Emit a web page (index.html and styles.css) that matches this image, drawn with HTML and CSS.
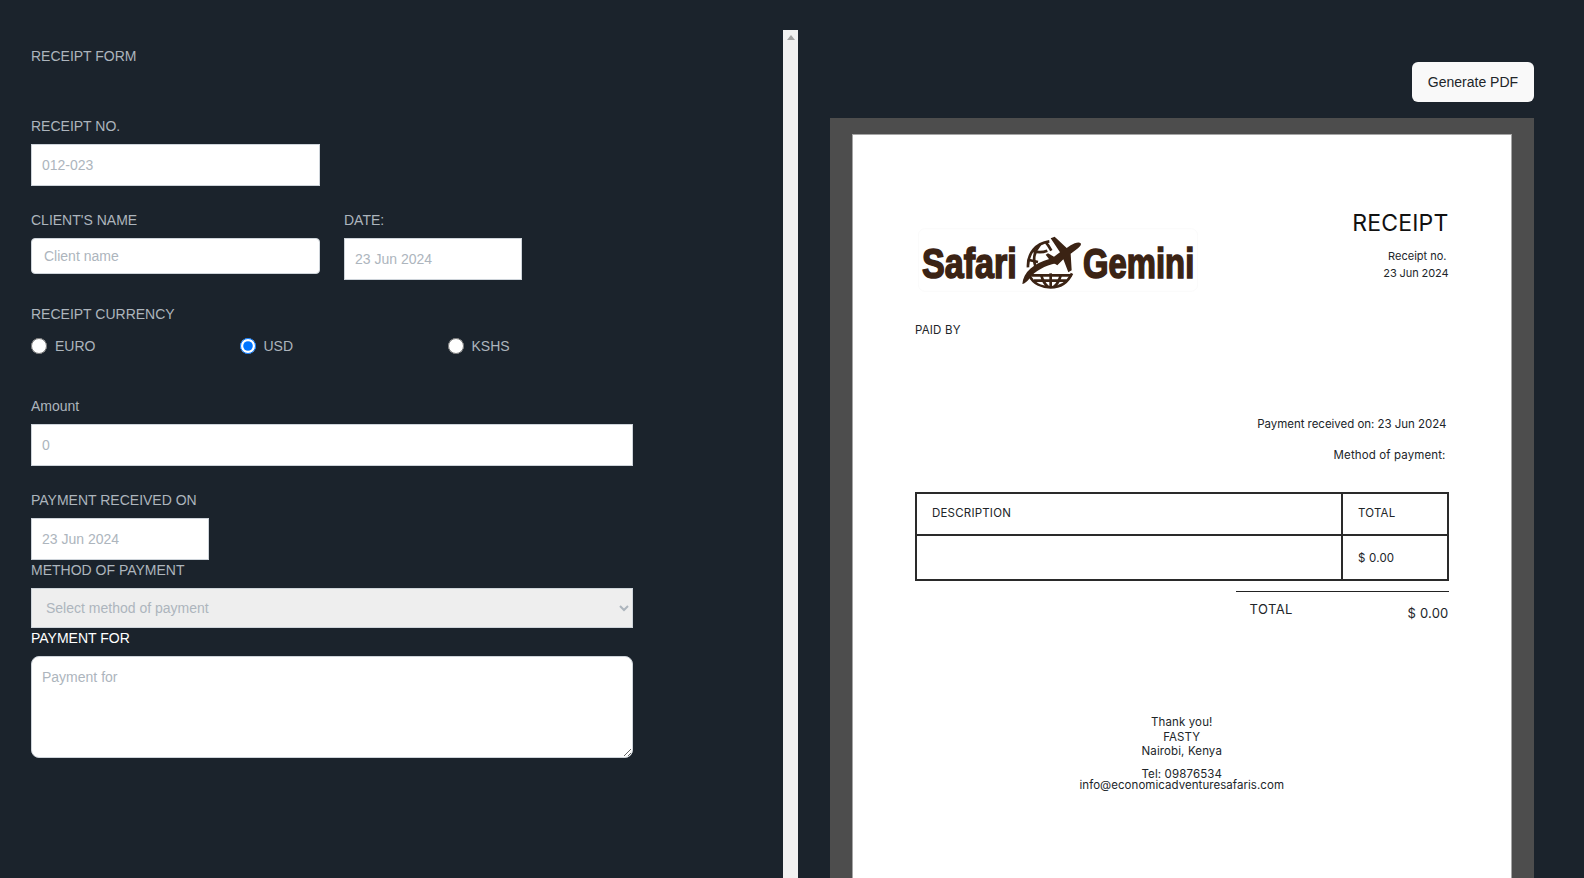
FILE: index.html
```html
<!DOCTYPE html>
<html lang="en">
<head>
<meta charset="utf-8">
<title>Receipt</title>
<link rel="stylesheet" href="styles.css">
</head>
<body>
<div class="app">
  <form class="form-pane">
    <div class="title">RECEIPT FORM</div>
    <div class="field field-first">
      <label class="label">RECEIPT NO.</label>
      <input class="input w-wide" placeholder="012-023">
    </div>
    <div class="row">
      <div class="field">
        <label class="label">CLIENT'S NAME</label>
        <input class="input input-client w-wide" placeholder="Client name">
      </div>
      <div class="field">
        <label class="label">DATE:</label>
        <input class="input w-date" placeholder="23 Jun 2024">
      </div>
    </div>
    <div class="field">
      <label class="label">RECEIPT CURRENCY</label>
      <div class="radios">
        <label class="radio"><input type="radio" name="cur">EURO</label>
        <label class="radio"><input type="radio" name="cur" checked>USD</label>
        <label class="radio"><input type="radio" name="cur">KSHS</label>
      </div>
    </div>
    <div class="field field-amount">
      <label class="label">Amount</label>
      <input class="input w-full" placeholder="0">
    </div>
    <div class="field">
      <label class="label">PAYMENT RECEIVED ON</label>
      <input class="input w-date" placeholder="23 Jun 2024">
    </div>
    <div class="field field-tight">
      <label class="label">METHOD OF PAYMENT</label>
      <select class="select w-full" disabled><option>Select method of payment</option></select>
    </div>
    <div class="field field-tight">
      <label class="label label-white">PAYMENT FOR</label>
      <textarea class="textarea w-full" placeholder="Payment for"></textarea>
    </div>
  </form>

  <div class="scrollbar"><span class="scroll-arrow"></span></div>

  <section class="preview-pane">
    <div class="actions"><button class="btn" type="button">Generate PDF</button></div>
    <div class="sheet-bg">
      <article class="sheet">
        <header class="sheet-head">
          <svg class="logo" viewBox="52 55 840 190" role="img" aria-label="Safari Gemini">
            <rect x="53" y="56" width="838" height="188" rx="20" fill="#fff" stroke="#f7f7f7" stroke-width="2"/>
            <text class="logo-text" transform="translate(64 205) scale(.81 1)">Safari</text>
            <text class="logo-text" transform="translate(547 205) scale(.78 1)">Gemini</text>
            <g fill="none" stroke="#3b2314" stroke-width="8">
              <path d="M382,172 C380,130 405,100 446,94"/>
              <path d="M418,104 C400,125 398,150 404,168"/>
              <path d="M396,122 C410,128 425,128 440,122"/>
              <path d="M385,150 L412,156"/>
              <path d="M436,98 C445,108 448,115 452,122"/>
              <path d="M392,196 H512"/>
              <path d="M400,212 H498"/>
              <path d="M386,196 C398,222 425,232 450,232 C478,232 500,220 514,190"/>
              <path d="M450,190 V232"/>
              <path d="M422,196 C426,212 434,224 442,230"/>
              <path d="M480,196 C476,212 468,224 460,230"/>
            </g>
            <g fill="#3b2314">
              <path d="M540,100 C536,95 522,98 510,106 L498,114 L462,80 L450,85 L478,127 L460,140 L442,130 L435,134 L450,154 L470,166 L488,148 L503,187 L513,181 L510,131 L530,116 C538,110 543,104 540,100 Z"/>
              <path d="M365,222 C368,186 398,160 448,146 L466,160 C434,166 402,184 386,206 C379,215 372,220 365,222 Z"/>
            </g>
          </svg>
          <div class="head-right">
            <h1 class="doc-title">RECEIPT</h1>
            <div class="doc-meta doc-no">Receipt no.</div>
            <div class="doc-meta doc-date">23 Jun 2024</div>
          </div>
        </header>
        <div class="paid-by">PAID BY</div>
        <div class="pay-line pay-first">Payment received on: 23 Jun 2024</div>
        <div class="pay-line pay-second">Method of payment:</div>
        <table class="items">
          <tr class="items-head"><td class="c-desc">DESCRIPTION</td><td class="c-total">TOTAL</td></tr>
          <tr class="items-row"><td></td><td class="c-total">$ 0.00</td></tr>
        </table>
        <div class="totals">
          <span class="totals-label">TOTAL</span>
          <span class="totals-value">$ 0.00</span>
        </div>
        <footer class="thanks">
          <div>Thank you!</div>
          <div>FASTY</div>
          <div>Nairobi, Kenya</div>
          <div class="tel">Tel: 09876534</div>
          <div class="mail">info@economicadventuresafaris.com</div>
        </footer>
      </article>
    </div>
  </section>
</div>
</body>
</html>
```

FILE: styles.css
```css
* { box-sizing: border-box; }
html, body { margin: 0; height: 100%; overflow: hidden; }
body {
  background: #1b232c;
  font-family: "Liberation Sans", Arial, sans-serif;
  font-size: 14px;
  color: #adb5bd;
}
.app { display: flex; height: 878px; overflow: hidden; align-items: flex-start; }

/* form */
.form-pane { width: 783px; flex: none; padding: 48px 0 0 31px; }
.title { line-height: 16px; }
.field { margin-top: 26px; }
.field-first { margin-top: 54px; }
.field-amount { margin-top: 44px; }
.field-tight { margin-top: 2px; }
.label { display: block; line-height: 16px; margin-bottom: 10px; }
.label-white { color: #fff; }
.row { display: flex; gap: 24px; align-items: flex-start; }
.w-wide { width: 289px; }
.w-date { width: 178px; }
.w-full { width: 602px; }
.input, .select, .textarea {
  display: block;
  font: 14px "Liberation Sans", Arial, sans-serif;
  border: 1px solid #ced4da;
  border-radius: 0;
  background: #fff;
  color: #495057;
  margin: 0;
  outline: none;
}
.input { height: 42px; padding: 0 10px; }
.input-client { height: 36px; border-radius: 4px; padding: 0 12px; }
.select {
  height: 40px;
  padding: 0 10px;
  background-color: #eee;
  color: #adb5bd;
  opacity: 1;
}
.textarea { height: 102px; padding: 12px 10px; border-radius: 8px; resize: vertical; }
::placeholder { color: #adb5bd; opacity: 1; }
.radios { display: grid; grid-template-columns: 208.5px 208px 1fr; margin-top: 16px; }
.radio { display: flex; align-items: center; gap: 8px; line-height: 16px; }
.radio input { width: 16px; height: 16px; margin: 0; }

/* scrollbar */
.scrollbar {
  width: 15px;
  height: 848px;
  margin-top: 30px;
  flex: none;
  background: #f1f1f1;
  display: flex;
  justify-content: center;
  padding-top: 5px;
}
.scroll-arrow {
  width: 0;
  height: 0;
  border-left: 4px solid transparent;
  border-right: 4px solid transparent;
  border-bottom: 5px solid #a3a3a3;
}

/* preview */
.preview-pane { flex: none; width: 736px; padding: 62px 0 0 32px; }
.actions { display: flex; justify-content: flex-end; }
.btn {
  width: 122px;
  height: 40px;
  font: 14px "Liberation Sans", Arial, sans-serif;
  color: #212529;
  background: #f9f9f9;
  border: 0;
  border-radius: 6px;
}
.sheet-bg { margin-top: 16px; background: #4d4d4d; padding: 16px 22.5px 0 22px; }
.sheet {
  background: #fff;
  border: 1px solid #a5a5a5;
  border-bottom: 0;
  min-height: 800px;
  padding: 74px 62px 0;
  font-family: Inter, "Liberation Sans", sans-serif;
  font-size: 11.5px;
  letter-spacing: .2px;
  color: #212529;
}
.sheet-head { display: flex; justify-content: space-between; align-items: flex-start; }
.logo { display: block; width: 280px; height: 64px; margin: 19px 0 0 3px; }
.logo-text {
  font-family: "Liberation Sans", Arial, sans-serif;
  font-weight: 700;
  font-size: 126px;
  fill: #3b2314;
  stroke: #3b2314;
  stroke-width: 5px;
}
.head-right { text-align: right; }
.doc-title {
  margin: 0 0 11px;
  font-size: 23px;
  line-height: 28px;
  font-weight: 400;
  letter-spacing: .2px;
  color: #111;
}
.doc-meta { line-height: 16px; font-size: 11px; letter-spacing: -.1px; }
.doc-no { padding-right: 2px; letter-spacing: 0; }
.doc-date { margin-top: 1px; }
.paid-by { margin-top: 30px; line-height: 16px; }
.pay-line { line-height: 16px; text-align: right; }
.pay-first { margin-top: 78px; padding-right: 2px; letter-spacing: -.03px; }
.pay-second { margin-top: 15px; padding-right: 3px; letter-spacing: .12px; }
.items {
  width: 534px;
  margin-top: 29px;
  border-collapse: collapse;
  border: 2px solid #2a2a2a;
  table-layout: fixed;
}
.items td { border: 2px solid #2a2a2a; padding: 0 0 0 15px; }
.items-head { height: 42px; }
.items-head td { padding-bottom: 3px; }
.items-row { height: 45px; }
.c-total { width: 106px; }
.totals {
  width: 213px;
  margin: 10px 0 0 auto;
  border-top: 1px solid #222;
  display: flex;
  justify-content: space-between;
  padding-left: 14px;
  font-size: 13px;
}
.totals-label { margin-top: 9px; line-height: 17px; letter-spacing: .45px; }
.totals-value { margin-top: 13px; line-height: 17px; }
.thanks { margin-top: 93px; text-align: center; line-height: 14.5px; letter-spacing: .12px; }
.tel { margin-top: 9px; line-height: 12px; }
.mail { line-height: 11px; letter-spacing: .05px; }
```
